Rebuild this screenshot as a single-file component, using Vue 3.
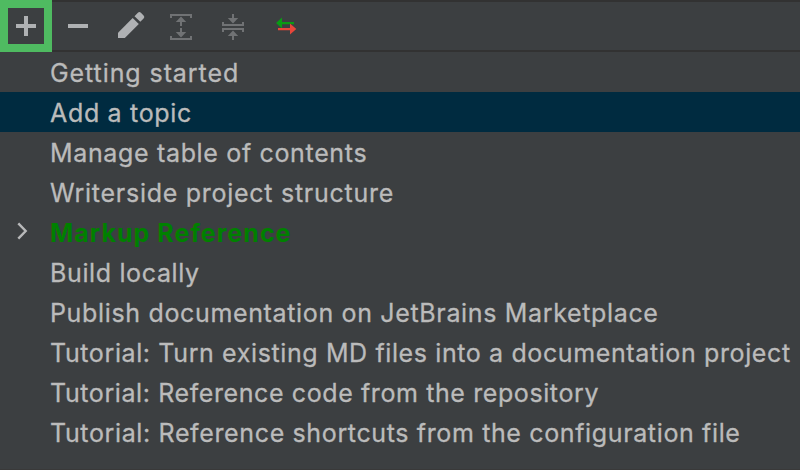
<script setup>
const topics = [
  { title: 'Getting started', spacing: 0.92 },
  { title: 'Add a topic', spacing: 0.68 },
  { title: 'Manage table of contents', spacing: 0.66 },
  { title: 'Writerside project structure', spacing: 0.73 },
  { title: 'Markup Reference', spacing: 1.03, group: true },
  { title: 'Build locally', spacing: 0.64 },
  { title: 'Publish documentation on JetBrains Marketplace', spacing: 0.655 },
  { title: 'Tutorial: Turn existing MD files into a documentation project', spacing: 0.615 },
  { title: 'Tutorial: Reference code from the repository', spacing: 0.6 },
  { title: 'Tutorial: Reference shortcuts from the configuration file', spacing: 0.635 },
]
const selected = 'Add a topic'
</script>

<template>
  <div class="panel">
    <div class="toolbar">
      <button class="tool add" aria-label="Add">
        <svg width="36" height="36" viewBox="0 0 36 36"><path d="M8 16h8V8h4v8h8v4h-8v8h-4v-8H8z" fill="#afb1b3" /></svg>
      </button>
      <button class="tool" aria-label="Remove">
        <svg width="52" height="52" viewBox="0 0 52 52"><path d="M16 24h20v4H16z" fill="#afb1b3" /></svg>
      </button>
      <button class="tool" aria-label="Edit">
        <svg width="52" height="52" viewBox="0 0 52 52" fill="#afb1b3">
          <path d="M14 38v-5.3L28.7 18l6.1 6.1L20.8 38z" />
          <path d="M30.5 16.2l3.4-3.4q1.5-1.5 3 0l2.7 2.7q1.5 1.5 0 3l-3.3 3.3z" />
        </svg>
      </button>
      <button class="tool" aria-label="Expand all">
        <svg width="52" height="52" viewBox="0 0 52 52" fill="#707274">
          <path d="M14 14h22v4h-2v-2H16v2h-2z" />
          <path d="M25 16.5l5.2 5.5H26v4h-2v-4h-4.2z" />
          <path d="M25 37.5l5.2-5.5H26v-4h-2v4h-4.2z" />
          <path d="M14 40h22v-4h-2v2H16v-2h-2z" />
        </svg>
      </button>
      <button class="tool" aria-label="Collapse all">
        <svg width="52" height="52" viewBox="0 0 52 52" fill="#707274">
          <path d="M14 26h22v-4h-2v2H16v-2h-2z" />
          <path d="M25 23.5l5.2-5.5H26v-4h-2v4h-4.2z" />
          <path d="M25 30.5l5.2 5.5H26v4h-2v-4h-4.2z" />
          <path d="M14 28h22v4h-2v-2H16v2h-2z" />
        </svg>
      </button>
      <button class="tool" aria-label="Synchronize">
        <svg width="52" height="52" viewBox="0 0 52 52">
          <path d="M16 23l6-5.5V22h12v2.2H22v4.3z" fill="#0a9b14" />
          <path d="M36.3 29l-6.3-5.5V28H18v2.2h12v4.3z" fill="#e8463a" />
        </svg>
      </button>
    </div>
    <ul class="tree">
      <li v-for="topic in topics" :key="topic.title" class="row" :class="{ selected: topic.title === selected, group: topic.group }">
        <span class="gutter">
          <svg v-if="topic.group" width="12" height="20" viewBox="0 0 12 20"><path d="M2.3 1.3L9.7 9l-7.4 7.7" fill="none" stroke="#b8b9ba" stroke-width="2.4" /></svg>
        </span>
        <span class="label" :style="{ letterSpacing: topic.spacing + 'px' }">{{ topic.title }}</span>
      </li>
    </ul>
  </div>
</template>

<style>
body { background: #3c3f41; }
</style>

<style scoped>
.panel {
  box-sizing: border-box;
  width: 800px;
  height: 470px;
  background: #3c3f41;
  border-bottom: 1px solid #393939;
  color: #bbbbbb;
  font: 25px Inter, "Liberation Sans", sans-serif;
  overflow: hidden;
}
.toolbar {
  display: flex;
  box-sizing: border-box;
  height: 52px;
  background: linear-gradient(#323232 2px, #3c3f41 2px, #3c3f41 50px, #323232 50px);
}
.tool {
  display: flex;
  box-sizing: border-box;
  width: 52px;
  height: 52px;
  padding: 0;
  border: 0;
  background: none;
}
.tool svg { display: block; }
.add { border: 8px solid #4fbb61; background: #3c3f41; }
.tree { margin: 0; padding: 0; list-style: none; }
.row {
  display: flex;
  align-items: center;
  height: 40px;
  white-space: nowrap;
}
.gutter { display: flex; width: 34px; padding-left: 16px; }
.label { line-height: 38px; padding-top: 2px; -webkit-text-stroke: 0.3px currentColor; }
.selected { background: #002b40; }
.group .label { color: #008000; font-weight: 700; -webkit-text-stroke: 0; }
</style>
